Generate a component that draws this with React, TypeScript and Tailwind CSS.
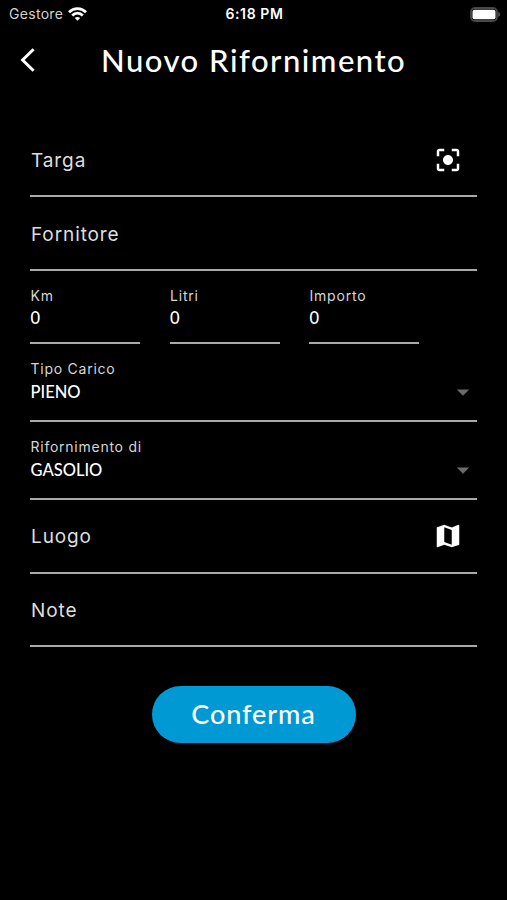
import React from 'react';
import { MdArrowDropDown, MdCenterFocusStrong, MdMap } from 'react-icons/md';

const TextRow = ({ label, icon }: { label: string; icon?: React.ReactNode }) => (
  <div className="flex h-[73.4px] items-center justify-between border-b-2 border-[#a9a9a9] pl-px pr-[14px]">
    <span className="pt-[3px] text-[19px] leading-6 tracking-[0.9px] text-[#dedede]">{label}</span>
    {icon}
  </div>
);

const NumberField = ({ label }: { label: string }) => (
  <div className="h-[73.4px] w-[110px] border-b-2 border-[#a9a9a9] pl-[0.5px] pt-[15px]">
    <div className="text-sm leading-5 tracking-[0.8px] text-[#d6d6d6]">{label}</div>
    <div className="mt-0.5 font-[Lato] text-[16.5px] leading-5 font-medium text-white">0</div>
  </div>
);

const SelectField = ({ label, value }: { label: string; value: string }) => (
  <div className="flex h-[78px] justify-between border-b-2 border-[#a9a9a9] pl-[0.5px] pt-[15px]">
    <div>
      <div className="text-sm leading-5 tracking-[0.75px] text-[#d6d6d6]">{label}</div>
      <div className="mt-[3px] font-[Lato] text-[16.5px] leading-5 font-medium text-white">{value}</div>
    </div>
    <MdArrowDropDown className="-mr-px mt-[18px] size-[30px] text-[#6b6b6b]" />
  </div>
);

const App = () => {
  return (
    <div className="min-h-[900px] w-full bg-black font-[Inter,sans-serif] text-white">
      {/* Status bar */}
      <div className="grid h-7 grid-cols-3 items-center pl-[9px] pr-[7px] text-sm">
        <div className="flex items-center gap-[5px]">
          <span className="tracking-[0.3px] text-[#d0d0d0]">Gestore</span>
          <svg className="h-[14px] w-[19px]" viewBox="0 0 19 14" fill="none" stroke="white" strokeWidth="2.8">
            <path d="M1 5.2C6 .3 13 .3 18 5.2" />
            <path d="M4.2 8.5c3.1-3 7.5-3 10.6 0" />
            <path d="M9.5 13.8L6.8 11c1.6-1.4 3.8-1.4 5.4 0z" fill="white" stroke="none" />
          </svg>
        </div>
        <span className="text-center font-semibold tracking-[0.6px]">6:18 PM</span>
        <svg className="h-[15px] w-[31px] justify-self-end" viewBox="0 0 31 15" fill="none">
          <rect x="2" y="1" width="26" height="13" rx="4" stroke="#484848" strokeWidth="1.8" />
          <rect x="3.5" y="2.8" width="23" height="9.4" rx="2" fill="white" />
          <path d="M29.4 5v5c2-.8 2-4.2 0-5z" fill="#666" />
        </svg>
      </div>

      {/* Header */}
      <header className="flex h-16 items-center pl-5">
        <svg className="h-6 w-[15px]" viewBox="0 0 15 24" fill="none" stroke="white" strokeWidth="3">
          <path d="M13.6 1.2L2.6 12l11 10.8" />
        </svg>
        <h1 className="ml-[66px] whitespace-nowrap font-[Lato] text-[31px] leading-9 font-medium tracking-[1.5px]">
          Nuovo Rifornimento
        </h1>
      </header>

      {/* Form */}
      <main className="px-[30px] pt-[32px]">
        <TextRow label="Targa" icon={<MdCenterFocusStrong className="size-[30px]" />} />
        <TextRow label="Fornitore" />
        <div className="flex gap-[29.5px]">
          <NumberField label="Km" />
          <NumberField label="Litri" />
          <NumberField label="Importo" />
        </div>
        <SelectField label="Tipo Carico" value="PIENO" />
        <SelectField label="Rifornimento di" value="GASOLIO" />
        <TextRow label="Luogo" icon={<MdMap className="size-[30px]" />} />
        <TextRow label="Note" />
        <button className="mx-auto mt-[39px] block h-[57px] w-[204px] rounded-full bg-[#0099d4] font-[Lato] text-[27px] font-medium tracking-[0.9px]">
          Conferma
        </button>
      </main>
    </div>
  );
};

export default App;
